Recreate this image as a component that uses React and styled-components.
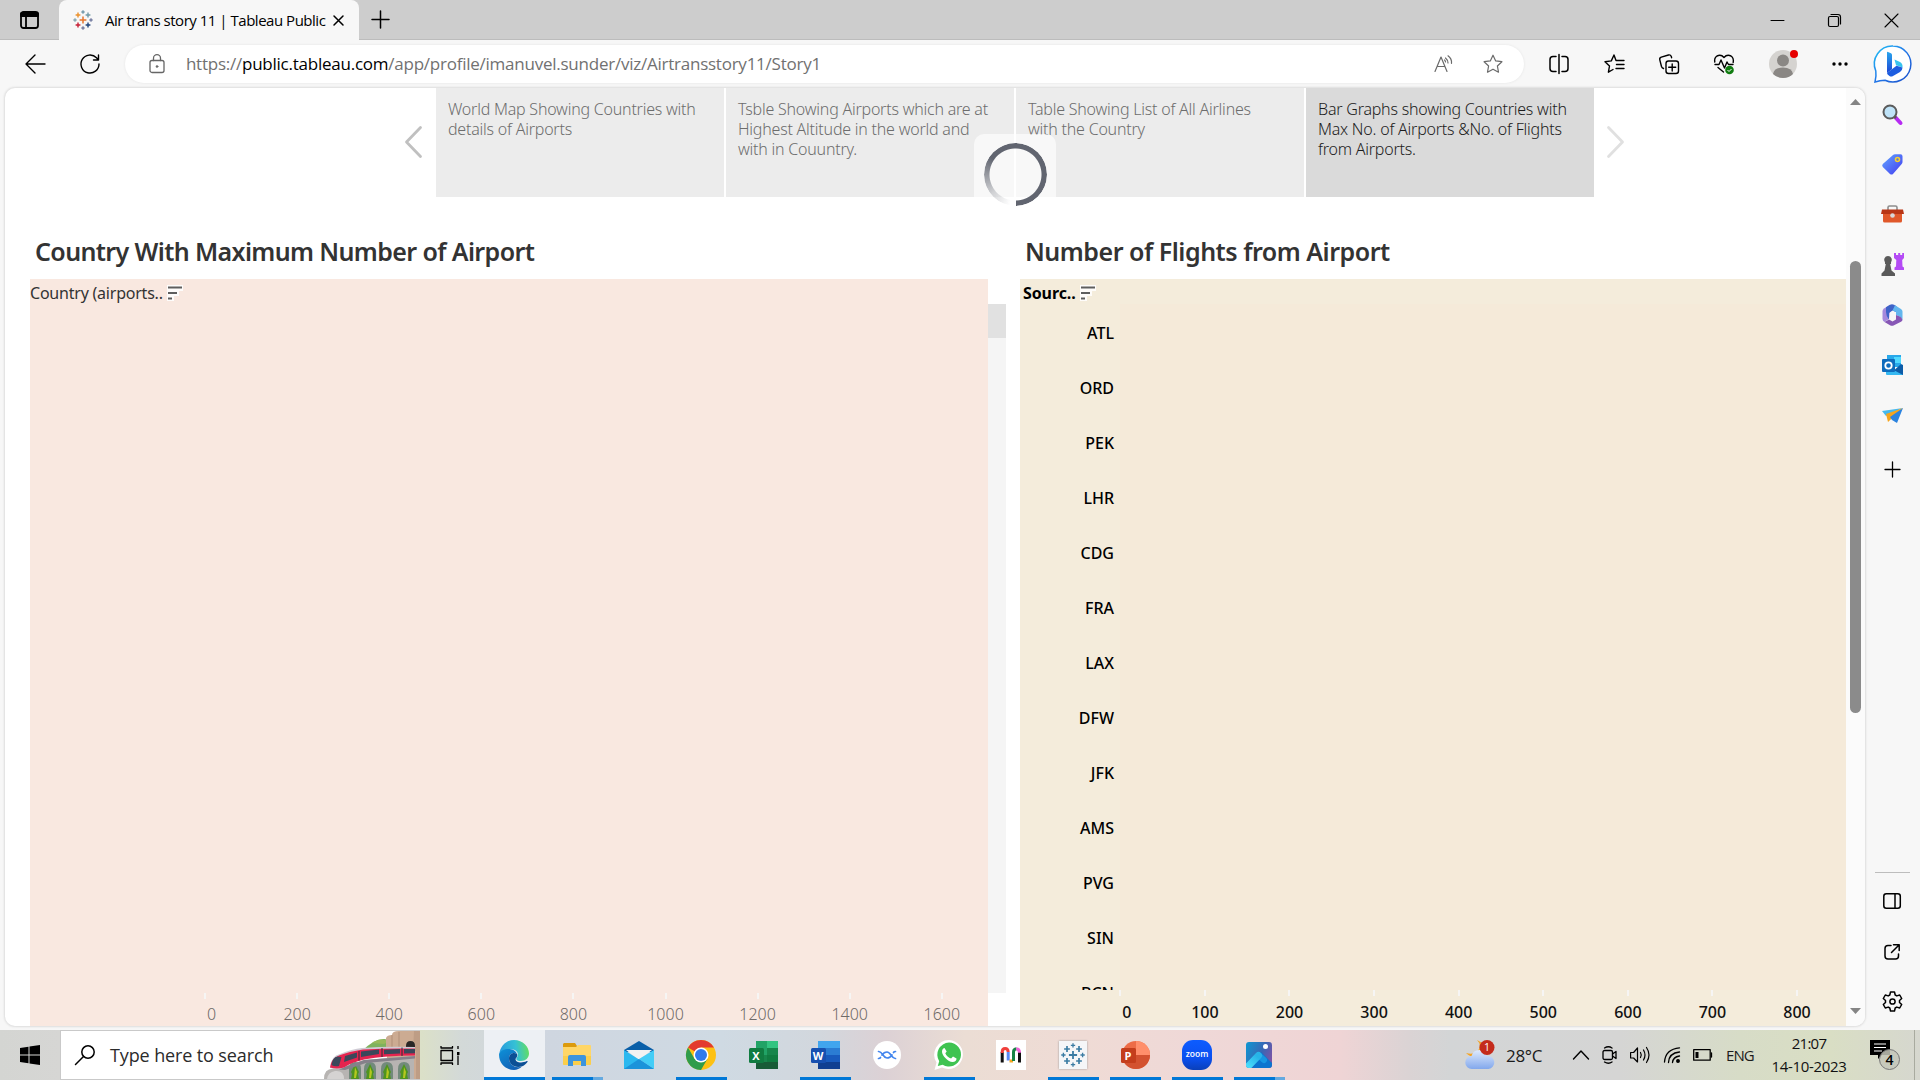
import React from "react";
import styled, { createGlobalStyle } from "styled-components";

const Global = createGlobalStyle`
  * { box-sizing: border-box; }
  body { margin: 0; overflow: hidden; background: #f7f7f7; }
  svg { display: block; flex: none; overflow: visible; }
`;
const ui = `"Open Sans", "Noto Sans", sans-serif`;
const chartFont = `"Noto Sans", "Open Sans", sans-serif`;

const Screen = styled.div`
  width: 1920px; height: 1080px; display: flex; flex-direction: column;
  background: #f7f7f7; font-family: ${ui}; color: #000; overflow: hidden;
`;
const TabBar = styled.header`
  height: 40px; flex: none; display: flex; background: #cdcdcd;
  box-shadow: inset 0 -1px 0 #bcbcbc;
`;
const TabActions = styled.div`
  width: 59px; display: flex; align-items: center; padding-left: 20px;
`;
const Tab = styled.div`
  width: 300px; height: 40px; display: flex; align-items: center; background: #f7f7f7;
  border-radius: 8px 8px 0 0; padding-left: 14px;
`;
const TabTitle = styled.span`
  width: 219px; margin: -1px 9px 0 12px; font-size: 15px; letter-spacing: -0.48px; white-space: nowrap;
`;
const NewTab = styled.div` display: flex; align-items: center; padding: 0 0 2px 13px; flex: 1; `;
const WindowButtons = styled.div`
  display: flex; align-items: center; gap: 44px; padding-right: 22px;
`;
const Toolbar = styled.div`
  height: 48px; flex: none; display: flex; align-items: center; padding: 0 8px 1px 25px;
`;
const NavButtons = styled.div` width: 100px; display: flex; gap: 35px; `;
const AddressBar = styled.div`
  width: 1400px; height: 38px; display: flex; align-items: center; background: #fff;
  border-radius: 19px; padding: 0 21px 0 24px; box-shadow: 0 0 3px rgba(0,0,0,.08);
`;
const Url = styled.span`
  flex: 1; margin-left: 21px; font-size: 17px; letter-spacing: -0.24px; color: #717171; white-space: nowrap;
  b { color: #000; font-weight: 400; }
`;
const AddressIcons = styled.div` display: flex; gap: 29px; align-items: center; `;
const ToolIcons = styled.div`
  flex: 1; display: flex; align-items: center; gap: 35px; padding-left: 25px;
  > :last-child { margin-left: -9px; }
`;
const Body = styled.div` height: 942px; flex: none; display: flex; `;
const Page = styled.main`
  width: 1860px; height: 938px; margin-left: 5px; background: #fff; border-radius: 10px; display: flex;
  overflow: hidden; box-shadow: 0 0 2px 1px #dedede;
`;
const Story = styled.div` width: 1841px; display: flex; flex-direction: column; `;
const StoryNav = styled.div` height: 109px; display: flex; padding-left: 400px; position: relative; `;
const NavArrow = styled.div`
  width: ${p => p.$w}px; padding: 38px 0 0 ${p => p.$pad || 0}px; color: ${p => p.$color};
`;
const StoryPoints = styled.div` display: flex; gap: 2px; `;
const StoryPoint = styled.div`
  width: 288px; height: 109px; padding: 11px 0 0 12px; font-family: ${chartFont};
  font-size: 16px; font-weight: 300; line-height: 20px; white-space: pre; letter-spacing: -0.22px;
  background: ${p => p.$active ? "#dadada" : "#ececec"};
  color: ${p => p.$active ? "#1c1c1c" : "#6d6d6d"};
`;
const Loader = styled.div`
  position: absolute; left: 969px; top: 46px; width: 82px; height: 82px; border-radius: 10px;
  background: rgba(255,255,255,.62); display: flex; align-items: center; justify-content: center;
`;
const Spinner = styled.div`
  width: 63px; height: 63px; border-radius: 50%; transform: translateY(-1px);
  background: conic-gradient(from 180deg, rgba(97,101,112,0) 10deg, rgba(97,101,112,.25) 50deg, #616570 125deg 360deg);
  mask: radial-gradient(circle closest-side, transparent 25.5px, #000 26.5px);
`;
const Charts = styled.div` display: flex; padding-left: 25px; height: 829px; `;
const LeftSheet = styled.section` width: 990px; `;
const RightSheet = styled.section` width: 826px; `;
const SheetTitle = styled.h2`
  height: 82px; margin: 0; padding: 38px 0 0 ${p => p.$pad}px; font: 600 25px/32px ${chartFont};
  letter-spacing: ${p => p.$ls}px; color: #333; white-space: nowrap;
`;
const LeftBody = styled.div` display: flex; height: 747px; `;
const LeftPane = styled.div`
  width: 958px; background: #f9e8e0; display: flex; flex-direction: column; justify-content: space-between;
`;
const SheetHeader = styled.div`
  height: 25px; display: flex; align-items: flex-start; gap: 4px; padding: 3px 0 0 ${p => p.$pad}px;
  font: ${p => p.$weight} 16px/22px ${chartFont}; letter-spacing: ${p => p.$ls}px; color: ${p => p.$color};
  svg { margin-top: 3px; }
`;
const PaneScroll = styled.div` width: 18px; height: 689px; margin-top: 25px; background: #f5f5f5; `;
const PaneThumb = styled.div` height: 34px; background: #e1e1e1; `;
const Axis = styled.div`
  display: flex; padding-left: ${p => p.$pad}px; height: ${p => p.$h}px; flex: none;
`;
const AxisStep = styled.div`
  width: ${p => p.$w}px; flex: none; display: flex; flex-direction: column; align-items: center;
  font: ${p => p.$weight} 16px/22px ${chartFont}; color: ${p => p.$color};
  &:first-child span { padding-left: 13px; }
`;
const Tick = styled.i` width: 2px; height: 6px; background: #f6f5f4; margin-bottom: ${p => p.$gap}px; `;
const RightPane = styled.div`
  height: 747px; background: #f4ecdb; display: flex; flex-direction: column;
`;
const Plot = styled.div` display: flex; height: 686px; overflow: hidden; flex: none; `;
const RowLabels = styled.div` width: 100px; display: flex; flex-direction: column; flex: none; `;
const RowLabel = styled.div`
  height: 55px; flex: none; text-align: right; padding: 2px 6px 0 0; font: 500 16px/55px ${chartFont};
`;
const PlotArea = styled.div` flex: 1; background: #f5ead9; `;
const Scrollbar = styled.div`
  width: 19px; background: #fbfbfb; display: flex; flex-direction: column; align-items: center;
  justify-content: space-between; padding: 11px 0 12px;
`;
const ScrollTrack = styled.div` flex: 1; padding-top: 156px; `;
const ScrollThumb = styled.div` width: 11px; height: 452px; border-radius: 6px; background: #8b8b8b; `;
const Sidebar = styled.aside`
  width: 54px; display: flex; flex-direction: column; align-items: center; padding-top: 1px;
`;
const SideSlot = styled.div`
  height: ${p => p.$h || 50.2}px; width: 40px; flex: none; display: flex; align-items: center; justify-content: center;
`;
const SideDivider = styled.div` width: 35px; height: 1px; background: #bdbdbd; margin: 374px 0 3px; flex: none; `;

const Taskbar = styled.footer`
  height: 50px; flex: none; display: flex;
  background: linear-gradient(90deg, #d4d5d2 0, #d6d6d4 60px, #dbe0c8 422px, #d3d9d8 462px, #cfd6e0 550px,
    #cfdae3 720px, #d2d7dd 820px, #dcd1d5 885px, #ebddd4 965px, #efdbd5 1080px, #efd8d7 1200px, #efd4d5 1340px,
    #dad3d4 1410px, #d3d5d6 1450px, #d5d5d4 1620px, #d7dcc7 1740px, #d9dec4 1830px, #d6d7cf 1920px);
`;
const Start = styled.div` width: 60px; display: flex; align-items: center; padding-left: 20px; `;
const Search = styled.div`
  width: 360px; height: 50px; background: #fff; border: 1px solid #c9c9c9; display: flex; align-items: center;
  padding-left: 14px; border-right: 0; overflow: hidden;
`;
const SearchText = styled.span`
  width: 229px; padding-left: 15px; font-size: 18px; color: #2b2b2b; letter-spacing: -0.12px; white-space: nowrap;
`;
const TaskView = styled.div` width: 64px; display: flex; align-items: center; padding-left: 20px; `;
const AppTile = styled.div`
  width: 62px; height: 50px; display: flex; flex-direction: column; align-items: center;
  justify-content: space-between; padding-top: 10px;
`;
const ActiveTile = styled(AppTile)` background: linear-gradient(90deg, #edf0f4 61px, transparent 61px); align-items: flex-start; > :first-child { padding-left: 15px; } `;
const Underline = styled.div`
  height: 3px; width: ${p => p.$full ? 61 : 51}px;
  background: ${p => p.$more ? "linear-gradient(90deg,#0078d7 41px,#64a9e0 41px)" : p.$on ? "#0078d7" : "transparent"};
`;
const Tray = styled.div` flex: 1; display: flex; align-items: center; padding-left: 175px; `;
const TrayText = styled.span`
  width: ${p => p.$w}px; padding-left: ${p => p.$pad || 0}px; font-size: ${p => p.$size}px;
  letter-spacing: ${p => p.$ls}px; color: #1b1b1b; white-space: nowrap;
`;
const TrayIcons = styled.div` display: flex; align-items: center; width: 153px; justify-content: space-between; padding-right: 14px; `;
const Clock = styled.div`
  width: 90px; text-align: center; font-size: 15px; line-height: 23px; letter-spacing: ${p => p.$ls || 0}px; color: #111;
  span { letter-spacing: -0.7px; }
`;
const Notice = styled.div` width: 60px; padding-left: 16px; `;
const ShowDesktop = styled.div` width: 6px; height: 50px; border-left: 1px solid #a8aa9f; `;

const Icon = ({ w = 20, h = w, vb, sw = 1.4, children }) => (
  <svg width={w} height={h} viewBox={vb || `0 0 ${w} ${h}`} fill="none" stroke="currentColor" strokeWidth={sw}
    strokeLinecap="round" strokeLinejoin="round">{children}</svg>
);
const Art = ({ w = 30, h = w, vb, children }) => (
  <svg width={w} height={h} viewBox={vb || `0 0 ${w} ${h}`}>{children}</svg>
);

const plus = (x, y, r, c, w = 1.5) => <path key={`${x}-${y}`} d={`M${x - r} ${y}h${2 * r}M${x} ${y - r}v${2 * r}`} stroke={c} strokeWidth={w} />;
const TableauMark = ({ size, mono }) => {
  const c = (x) => mono ? "#3b7ca3" : x;
  return (
    <Art w={size} vb="0 0 20 20">
      {plus(10, 10, 3.4, c("#e8762d"), 1.5)}
      {plus(5, 5, 2.4, c("#eb912c"), 1.4)}{plus(15, 5, 2.4, c("#7099a6"), 1.4)}
      {plus(5, 15, 2.4, c("#c72035"), 1.4)}{plus(15, 15, 2.4, c("#1f457e"), 1.4)}
      {plus(10, 2, 1.8, c("#59879b"), 1.1)}{plus(10, 18, 1.8, c("#5b6591"), 1.1)}
      {plus(2, 10, 1.8, c("#7099a6"), 1.1)}{plus(18, 10, 1.8, c("#5b6591"), 1.1)}
    </Art>
  );
};
const SortIcon = () => (
  <Art w={16}><path fill="#fff" d="M0 0h16v6h-4v5H7v5H0z" opacity=".85" /><path d="M1 2.500h14M1 8h9M1 13.500h4" stroke="#5e5e5e" strokeWidth="2" /></Art>
);

const Edge = () => (
  <Art>
    <defs>
      <linearGradient id="eg1" x1="0" x2="1" y1=".3" y2=".2"><stop stopColor="#279bdd" /><stop offset=".55" stopColor="#35c1d5" /><stop offset="1" stopColor="#66df5a" /></linearGradient>
      <linearGradient id="eg2" x1="0" y1="0" x2=".6" y2="1"><stop stopColor="#0d91d8" /><stop offset="1" stopColor="#1361b5" /></linearGradient>
    </defs>
    <path fill="url(#eg1)" d="M.3 14.5C1 6 7.500 0 15 0c9 0 15 6.500 15 13.500 0 4.500-3.500 7.500-8 7.500-3.500 0-5.500-1.500-4.500-2.800 3.200-4 .5-8.700-5-8.900C7 9.200 1.700 12 .3 14.5z" />
    <path fill="url(#eg2)" d="M.1 14C1.500 10.500 6 8.600 10.500 9c3.700.3 6.500 2.200 7.600 5-4-2.400-8.100.2-8.100 4.500 0 5 5.500 10.600 13 8-2.300 2.200-5 3.500-8 3.500C6.500 30-.5 23 .1 14z" />
    <path fill="#0c4f95" d="M18.100 14c-4-2.400-8.100.2-8.100 4.500 0 5.500 6 10.500 13.300 7.800 2.200-1 4.200-2.900 5.300-4.600.3-.6-.2-.9-.8-.6-5.800 2.900-11.800.8-11.200-2.100.2-1.300 2.300-2 1.500-5z" />
  </Art>
);
const Folder = () => (
  <Art w={28} h={24}>
    <path fill="#dc9a0c" d="M1 0h11l2 3v4H0V1z" /><path fill="#ffd667" d="M0 4h13l2-2h12q1 0 1 1v18q0 1-1 1H1q-1 0-1-1z" />
    <path fill="#f9c838" d="M0 13h28v8q0 1-1 1H1q-1 0-1-1z" opacity=".6" /><path fill="#3c94dc" d="M5 23v-9q0-2 2-2h14q2 0 2 2v9h-5v-5h-8v5z" />
  </Art>
);
const Mail = () => (
  <Art w={30} h={28}>
    <path fill="#0a5fa8" d="M0 9 15 0l15 9v2H0z" /><path fill="#f2f2f2" d="M2 9h26L15 19z" />
    <path fill="#2bb8ef" d="M0 9v19h30z" /><path fill="#43cdf7" d="M30 9v19L15 18z" /><path fill="#1b93da" d="m0 28 15-10 15 10z" />
  </Art>
);
const Chrome = () => (
  <Art vb="0 0 30 30">
    <circle cx="15" cy="15" r="15" fill="#fdc113" />
    <path fill="#e33b2e" d="M15 15 2 7.500A15 15 0 0 1 28 7.500H15z" /><path fill="#2f9c4b" d="M2 7.500A15 15 0 0 0 15 30l6.500-11.200L8.500 18.800z" />
    <circle cx="15" cy="15" r="7.500" fill="#fff" /><circle cx="15" cy="15" r="6" fill="#2f7bed" />
  </Art>
);
const OfficeLetter = styled.span`
  position: absolute; left: 0; top: 7px; width: 15px; height: 15px; border-radius: 1.5px; background: ${p => p.$bg};
  color: #fff; font: 700 11px/15px ${ui}; text-align: center;
`;
const OfficeBox = styled.div` position: relative; width: 29px; height: 28px; `;
const Office = ({ letter, tones, badge }) => (
  <OfficeBox>
    <Art w={29} h={28}>
      {letter === "X"
        ? <><path fill={tones[1]} d="M7 0h11v7H7z" /><path fill={tones[0]} d="M18 0h11v7H18z" /><path fill={tones[2]} d="M18 7h11v7H18zM7 14h11v7H7z" /><path fill={tones[1]} d="M7 7h11v7H7z" /><path fill="#107c41" d="M18 14h11v7H18z" /><path fill={tones[3]} d="M7 21h22v7H7z" /></>
        : tones.map((t, i) => <path key={t} fill={t} d={`M7 ${i * 7}h22v7H7z`} />)}
    </Art>
    <OfficeLetter $bg={badge}>{letter}</OfficeLetter>
  </OfficeBox>
);
const PowerPoint = () => (
  <OfficeBox>
    <Art w={29} h={28}><circle cx="15" cy="14" r="14" fill="#ed6c47" /><path fill="#ff8f6b" d="M15 0a14 14 0 0 1 14 14H15z" /><path fill="#d35230" d="M1 14h28a14 14 0 0 1-28 0z" /></Art>
    <OfficeLetter $bg="#c43e1c">P</OfficeLetter>
  </OfficeBox>
);
const Nx = () => (
  <Art w={28}><circle cx="14" cy="14" r="14" fill="#fff" />
    <g fill="none" stroke="#4285ee" strokeWidth="1.700" strokeLinecap="round"><path d="M5.500 10.500c4-.5 4.500 6.500 8.500 6.500 3 0 4-1.500 5-3M22.500 17.500c-4 .5-4.500-6.500-8.500-6.500-3 0-4 1.500-5 3M5.500 17.500q1.500 0 2-1M22.500 10.500q-1.500 0-2 1" /></g>
  </Art>
);
const WhatsApp = () => (
  <Art><path fill="#fff" d="M15 0a14.500 14.500 0 1 1-7 27.500L.5 30l2-7.500A14.700 14.700 0 0 1 15 0z" />
    <path fill="#3fc351" d="M15 2.500a12 12 0 1 1-6.300 22.200L3.800 26l1.400-4.800A12.200 12.200 0 0 1 15 2.500z" />
    <path fill="#fff" d="M10.500 8c-.8-.1-2.500 1.200-2.500 3.700 0 3.800 6.200 10.300 10.500 10.300 2.500 0 4.300-1.700 4-3.500l-3.500-2-1.900 2c-2.500-.7-4.900-3.100-5.800-5.300l1.400-1.800z" />
  </Art>
);
const MApp = () => (
  <Art><path fill="#fff" d="M0 0h30v30H0z" /><g fill="none" strokeWidth="3">
    <path stroke="#111" d="M6.200 22.500V12M23.500 22.500V12" /><path stroke="#f0403c" d="M6.200 13v-1q0-3.500 3-3.500 2.800 0 3 3.500" /><path stroke="#5a89f4" d="M12.200 12v8.500" />
    <path stroke="#f5a623" d="M13.500 21h3.500" /><path stroke="#168344" d="M17.500 21v-9q0-3 3-3.300" /><path stroke="#ef62d6" d="M20.300 8.700q3.200.3 3.200 4" /></g>
  </Art>
);
const TableauTile = styled.div`
  width: 28px; height: 28px; background: #f5f6f8; display: flex; align-items: center; justify-content: center; box-shadow: 0 0 2px #999;
`;
const ZoomTile = styled.div`
  width: 30px; height: 30px; border-radius: 11px; background: linear-gradient(#0d5cff, #0b50f0 60%, #0a3fb9); color: #fff;
  font: 600 8.500px/27px ${ui}; text-align: center;
`;
const Photos = () => (
  <Art w={26}><defs>
    <linearGradient id="ph" x1="0" y1=".2" x2="1" y2=".6"><stop stopColor="#1292cf" /><stop offset=".6" stopColor="#3a66b4" /><stop offset="1" stopColor="#7a54a6" /></linearGradient>
    <linearGradient id="ph2" x1=".8" y1="0" x2="0" y2="1"><stop stopColor="#27b4e8" /><stop offset="1" stopColor="#4fe3ff" /></linearGradient>
    <clipPath id="phc"><rect width="26" height="26" rx="3" /></clipPath></defs>
    <g clipPath="url(#phc)"><path fill="url(#ph)" d="M0 0h26v26H0z" /><path fill="#0b74cf" d="M15 10 28 23v5H5l8-12z" />
      <path fill="none" stroke="#1596e3" strokeWidth="6" strokeLinecap="round" strokeLinejoin="round" d="m13 13.500 5 4.500" />
      <path fill="none" stroke="url(#ph2)" strokeWidth="7" strokeLinecap="round" d="M0 26.500 12.500 13.500" /></g>
    <circle cx="19.500" cy="4.500" r="2.500" fill="#fff" />
  </Art>
);
const Train = () => (
  <Art w={96} h={48} vb="0 0 96 48">
    <path fill="#7fb25d" d="M37 21Q50 7 61 8l9 4v9z" /><path fill="#9ab95a" d="M48 12q8-6 18-2l-6 3z" />
    <path fill="#ccab92" d="M62 20V7q1-3 6-3 0-4 7-4h21v48H66z" /><path fill="#b2917a" d="M67 4h2v14h-2zM74 1h2v17h-2zM90 0h6v48h-4V20h-3z" opacity=".55" />
    <path fill="#292626" d="M82 18v-3q0-5 4.500-5t4.500 5v3z" />
    <path fill="#b7b4b2" d="M0 48q0-12 12-10l28-9 50-4v23z" />
    <path fill="#d5d3d2" d="M3 48q1-7 8-8 9-1 9 8z" />
    {[25, 40, 57, 74].map(x => <g key={x}><path fill="#728a7c" d={`M${x} 48V38q0-7 6-7t6 7v10z`} /><path fill="#4f9420" d={`m${x + 6} 33 4 8-1 2 1 5h-8l1-5-1-2z`} /><path fill="#b5c81e" d={`m${x + 6} 36 2 5-1 6h-2z`} /></g>)}
    <path fill="#85808a" d="M19 36.500 40 29l51-4v2.500L42 32l-21 7-6-.5z" />
    <path fill="#cfcbd4" d="M6 36q1-11 10-13 12-5 22-6 24-2 53-1v8q-30 0-50 4-14 3-22 9-7 2-13 0z" />
    <path fill="#e5244f" d="M6 36.500q1-9 9-12 10-4 24-6 24-1.500 52-1v7q-30 0-51 4-13 3-20 8-7 2-14 0z" />
    <path fill="#3b475a" d="M7.500 34q1-8 6-8.500l4 .5-2.500 9q-4 1-7.500-1zM21 25l12-3.500v5L20 31zM37 20.500l18-2v4.500l-18 3zM60 18.700l16-.7v4.500l-16 .8zM80 18h11v4.300l-11 .2z" />
    <path stroke="#2b2f3a" d="M35 20v9.500M58 17v9M78 16.500v8.500" fill="none" />
  </Art>
);
const Weather = () => (
  <Art w={30} h={30}><path fill="#f5a423" d="M12 0q5 5 1 11-4 4-12 2 5 5 10 4l9-4Q20 3 12 0z" />
    <defs><linearGradient id="cl" x1="0" y1="0" x2="0" y2="1"><stop stopColor="#dfeafd" /><stop offset="1" stopColor="#82a8ec" /></linearGradient></defs>
    <path fill="url(#cl)" d="M7 29a6.500 6.500 0 0 1-.5-13Q8 10 14.500 10T22 16a6.500 6.500 0 1 1 1.500 13z" />
    <circle cx="22" cy="7.500" r="7.500" fill="#c42b1c" /><text x="22" y="11.300" fill="#fff" fontSize="10.500" fontFamily="Open Sans, sans-serif" textAnchor="middle">1</text>
  </Art>
);
const Bing = () => (
  <Art w={38}><defs><linearGradient id="bb" x1="0" y1="0" x2="1" y2="1"><stop stopColor="#22c3f5" /><stop offset=".5" stopColor="#2277e8" /><stop offset="1" stopColor="#1b4fc9" /></linearGradient>
    <linearGradient id="bb2" x1="0" y1="0" x2="0" y2="1"><stop stopColor="#2aa7ee" /><stop offset="1" stopColor="#1c46d4" /></linearGradient></defs>
    <path fill="#fff" stroke="url(#bb)" strokeWidth="1.500" d="M19 1a18 18 0 1 1-8 34.200Q6 35.500 1 37q1.500-6 .8-11A18 18 0 0 1 19 1z" />
    <path fill="url(#bb2)" d="M13 7.500q0-1 1-.6l3 1.300q1 .5 1 1.500v14.500L13 28z" /><path fill="#38c4ee" d="M20.500 14.500 26 17q3 1.500 2.500 5.500L22 20.200z" />
    <path fill="#1d5de0" d="m13 28 9.500-7.300 6 1.800q0 3-2.500 4.500L19 31q-2 1-3.500 0Q13 29.500 13 28z" />
  </Art>
);
const SideArt = {
  search: <Art w={20} h={21}><path d="m13.500 13.500 5 5.500" stroke="#b62bf2" strokeWidth="4" strokeLinecap="round" /><path d="m12 12 2 2" stroke="#555" strokeWidth="2.500" /><circle cx="8" cy="8" r="6.500" fill="#bfe3f8" stroke="#5b5b5b" strokeWidth="2" /></Art>,
  tag: <Art w={21}><defs><linearGradient id="tg" x1="0" y1="0" x2="1" y2="1"><stop stopColor="#62a8ff" /><stop offset="1" stopColor="#4239f0" /></linearGradient></defs><path fill="url(#tg)" d="M11 1q.8-.8 2-.8h5.500q2 0 2 2V8q0 1-.8 2L11 20q-1.500 1.200-3 0L.8 13Q-.4 11.500.8 10z" /><circle cx="15.500" cy="5.500" r="2" fill="#5b7bd0" stroke="#f6cf31" strokeWidth="1.600" /></Art>,
  toolbox: <Art w={23} h={18}><path d="M7 5V2.500Q7 1 8.500 1h6Q16 1 16 2.500V5" fill="none" stroke="#8d8d8d" strokeWidth="1.600" /><path fill="#e0582a" d="M2 9h19v7q0 1.500-1.500 1.500h-16Q2 17.500 2 16z" /><path fill="#b83616" d="M1 4.500h21L23 9H0z" /><circle cx="11.500" cy="10.500" r="2.300" fill="#d8d8d8" /></Art>,
  chess: <Art w={23} h={23}><path fill="#b44bf5" d="M13 0h2v2h2.200V0h2v2h2V0H23v5l-1.800 2 .3 6.500 1.500 1V17h-9.500v-2.500l1.500-1 .3-6.500L13 5z" /><path fill="#5a5a5a" d="M7 3a4 4 0 0 1 3 6.500V11h-.8l1.300 6.500 3.500 3V23H.5v-2.500l3-3L4.800 11H4V9.500A4 4 0 0 1 7 3z" /></Art>,
  m365: <Art w={21} h={22}><path fill="#a489dc" d="M8 .8v3.700L7 15l-4.500 3Q.5 17 .5 15V7q0-1.500 1.500-2.500z" /><path fill="#3e63c8" d="M8 .8q2-1.300 4 0l2.500 1.400v6L10.500 6.500 7 9v6.500Q4 12 4 8V3.200z" /><path fill="#62b6ee" d="M13 1.300 19 5q1.500 1 1.500 2.500V16q-1-3-6.500-5V8l-3.500-1.500z" /><path fill="#8757b5" d="M14 11q6 1.500 6.500 5-.3 1-1.500 1.800L12 21.300q-2 1-4 0L2.500 18 7 15.500l3.500 2 3.500-2z" /></Art>,
  outlook: <Art w={21}><path fill="#28a8ea" d="M5 0h14v12H5z" /><path fill="#0c5ca8" d="m19 9 2 1v10H7z" /><path fill="#35b8f1" d="m4 11 17 9H5q-1 0-1-1z" /><path fill="#50d9ff" d="M12 2h7v6h-7z" /><rect y="4" width="13" height="13" rx="1" fill="#0f6cbd" /><circle cx="6.500" cy="10.500" r="3.200" fill="none" stroke="#fff" strokeWidth="1.800" /></Art>,
  plane: <Art w={21} h={15}><path fill="#45b9ef" d="M0 3 21 0 4 8z" /><path fill="#f6a51d" d="M4 6 21 0 6 14z" /><path fill="#2b83df" d="M8 9 21 0l-6 15-5-3z" /></Art>,
  plus: <Icon w={15} sw={1.300}><path d="M7.500 0v15M0 7.500h15" /></Icon>,
};
const sideOrder = ["search", "tag", "toolbox", "chess", "m365", "outlook", "plane", "plus"];

const star = "M10 1.200l2.700 5.700 6.200.8-4.500 4.300 1.100 6.200-5.500-3-5.500 3 1.100-6.200L1.100 7.700l6.200-.8z";

const points = [
  { text: "World Map Showing Countries with\ndetails of Airports" },
  { text: "Tsble Showing Airports which are at\nHighest Altitude in the world and\nwith in Couuntry." },
  { text: "Table Showing List of All Airlines\nwith the Country" },
  { text: "Bar Graphs showing Countries with\nMax No. of Airports &No. of Flights\nfrom Airports.", active: true },
];
const airports = ["ATL", "ORD", "PEK", "LHR", "CDG", "FRA", "LAX", "DFW", "JFK", "AMS", "PVG", "SIN", "BCN"];
const range = (step) => Array.from({ length: 9 }, (_, i) => i * step);

const apps = [
  { icon: <Edge />, on: true, full: true },
  { icon: <Folder />, on: true, more: true },
  { icon: <Mail /> },
  { icon: <Chrome />, on: true },
  { icon: <Office letter="X" tones={["#33c481", "#21a366", "#17864c", "#185c37"]} badge="#107c41" /> },
  { icon: <Office letter="W" tones={["#41a5ee", "#2b7cd3", "#185abd", "#103f91"]} badge="#1750b0" />, on: true },
  { icon: <Nx /> },
  { icon: <WhatsApp />, on: true },
  { icon: <MApp /> },
  { icon: <TableauTile><TableauMark size={24} mono /></TableauTile>, on: true },
  { icon: <PowerPoint />, on: true },
  { icon: <ZoomTile>zoom</ZoomTile>, on: true },
  { icon: <Photos />, on: true, more: true },
];
const AppArt = styled.div` height: 30px; display: flex; align-items: center; `;

export default function App() {
  return (
    <Screen>
      <Global />
      <TabBar>
        <TabActions><Icon w={19} h={18} sw={1.800}><rect x="1" y="1" width="17" height="16" rx="2.500" /><path d="M1 5h17M6 5v12" /><path d="M2 3h15" strokeWidth="4" /></Icon></TabActions>
        <Tab>
          <TableauMark size={20} />
          <TabTitle>Air trans story 11 | Tableau Public</TabTitle>
          <Icon w={11} sw={1.500}><path d="m1 1 9 9M10 1 1 10" /></Icon>
        </Tab>
        <NewTab><Icon w={17} sw={1.500}><path d="M8.500 0v17M0 8.500h17" /></Icon></NewTab>
        <WindowButtons>
          <Icon w={13} sw={1}><path d="M0 6.500h13" /></Icon>
          <Icon w={13} sw={1.200}><rect x=".5" y="2.500" width="10" height="10" rx="1.500" /><path d="M3 .5h7q2.500 0 2.500 2.500v7" /></Icon>
          <Icon w={13} sw={1.100}><path d="m0 0 13 13M13 0 0 13" /></Icon>
        </WindowButtons>
      </TabBar>
      <Toolbar>
        <NavButtons>
          <Icon w={20}><path d="M10 1 1 10l9 9M1 10h19" /></Icon>
          <Icon w={20}><path d="M19 10a9 9 0 1 1-2.500-6.200L18.500 6M18.500 1v5h-5" /></Icon>
        </NavButtons>
        <AddressBar>
          <Icon w={16} h={19} sw={1.300}><g stroke="#666"><rect x="1" y="6.500" width="14" height="12" rx="2" /><path d="M4.500 6.500V4.200a3.500 3.500 0 0 1 7 0v2.300" /></g><circle cx="8" cy="12.500" r="1" fill="#666" stroke="#666" strokeWidth=".6" /></Icon>
          <Url>https://<b>public.tableau.com</b>/app/profile/imanuvel.sunder/viz/Airtransstory11/Story1</Url>
          <AddressIcons>
            <Icon w={20} sw={1.200}><g stroke="#6a6a6a"><path d="M1 17.500 7 3l6 14.500M3 12.500h8" /><path d="M11.500 4q2.500 2 2.500 5M14 1.800q4 3 3.500 7.500M10.500 6q.8.5 1 1.800" /></g></Icon>
            <Icon w={20} sw={1.200}><path d={star} stroke="#6a6a6a" /></Icon>
          </AddressIcons>
        </AddressBar>
        <ToolIcons>
          <Icon w={20} sw={1.500}><path d="M7 2.500H4q-3 0-3 3v9q0 3 3 3h3M13 2.500h3q3 0 3 3v9q0 3-3 3h-3M10 .5v19" /></Icon>
          <Icon w={20}><path d="M12 6.500 10 1 7.300 6.900 1 7.700 5.500 12l-1.100 6.200 4.600-2.700M12 6.500h8M12.500 10.500H20M12 14.500h8" /></Icon>
          <Icon w={20}><rect x="7" y="7" width="12.500" height="12.500" rx="2.500" /><path d="M13.200 10v7M9.700 13.300h7M4.500 14.500q-1.500-.5-2-2L.8 5.800q-.5-2 1.500-2.700L9.500 1q2-.5 2.800 1.500l.3 1.200" /></Icon>
          <Art w={20} h={20}><g fill="none" stroke="#000" strokeWidth="1.400" strokeLinecap="round" strokeLinejoin="round"><path d="M.8 8Q0 4 3 2q4-2 7 1.500Q13 0 17 2q3 2 2.200 6.500M1 10.500h4l2-4.500 3.500 8 2.500-6 1.500 2.500h4.500M4 13.500l5.500 4.500" /></g><circle cx="15.500" cy="16" r="4.300" fill="#107c10" /><path d="m13.500 16 1.500 1.500 2.500-2.500" stroke="#fff" fill="none" /></Art>
          <Art w={28} h={28}><circle cx="14" cy="14" r="14" fill="#d5d3d0" /><circle cx="14" cy="10.500" r="6" fill="#8a8784" /><path fill="#8a8784" d="M4 24q1-6.500 10-6.500T24 24q-4 4-10 4T4 24z" /><circle cx="25" cy="4" r="4" fill="#e60000" /></Art>
          <Art w={16} h={4}><circle cx="2" cy="2" r="1.700" /><circle cx="8" cy="2" r="1.700" /><circle cx="14" cy="2" r="1.700" /></Art>
          <Bing />
        </ToolIcons>
      </Toolbar>
      <Body>
        <Page>
          <Story>
            <StoryNav>
              <NavArrow $w={31} $color="#c0c0c0"><Icon w={17} h={32} sw={2.800}><path d="M15.500 1.500 1.500 16l14 14.500" /></Icon></NavArrow>
              <StoryPoints>
                {points.map(p => <StoryPoint key={p.text} $active={p.active}>{p.text}</StoryPoint>)}
              </StoryPoints>
              <NavArrow $w={40} $pad={13} $color="#e0e0e0"><Icon w={17} h={32} sw={2.800}><path d="m1.500 1.500 14 14.500-14 14.500" /></Icon></NavArrow>
              <Loader><Spinner /></Loader>
            </StoryNav>
            <Charts>
              <LeftSheet>
                <SheetTitle $pad={5} $ls={-0.62}>Country With Maximum Number of Airport</SheetTitle>
                <LeftBody>
                  <LeftPane>
                    <SheetHeader $pad={0} $weight={400} $color="#333" $ls={-0.22}><span>Country (airports..</span><SortIcon /></SheetHeader>
                    <Axis $pad={129} $h={33}>
                      {range(200).map(v => <AxisStep key={v} $w={92.1} $weight={300} $color="#6e6a68"><Tick $gap={4} /><span>{v}</span></AxisStep>)}
                    </Axis>
                  </LeftPane>
                  <PaneScroll><PaneThumb /></PaneScroll>
                </LeftBody>
              </LeftSheet>
              <RightSheet>
                <SheetTitle $pad={5} $ls={-0.48}>Number of Flights from Airport</SheetTitle>
                <RightPane>
                  <SheetHeader $pad={3} $weight={700} $color="#000" $ls={-0.1}><span>Sourc..</span><SortIcon /></SheetHeader>
                  <Plot>
                    <RowLabels>{airports.map(a => <RowLabel key={a}>{a}</RowLabel>)}</RowLabels>
                    <PlotArea />
                  </Plot>
                  <Axis $pad={58} $h={36}>
                    {range(100).map(v => <AxisStep key={v} $w={84.6} $weight={500} $color="#111"><Tick $gap={5} /><span>{v}</span></AxisStep>)}
                  </Axis>
                </RightPane>
              </RightSheet>
            </Charts>
          </Story>
          <Scrollbar>
            <Art w={11} h={6}><path fill="#858585" d="M0 6 5.500 0 11 6z" /></Art>
            <ScrollTrack><ScrollThumb /></ScrollTrack>
            <Art w={11} h={6}><path fill="#858585" d="m0 0 5.500 6L11 0z" /></Art>
          </Scrollbar>
        </Page>
        <Sidebar>
          {sideOrder.map(k => <SideSlot key={k} $h={k === "plus" ? 58 : 50.2}>{SideArt[k]}</SideSlot>)}
          <SideDivider />
          <SideSlot><Icon w={18} h={16} sw={1.500}><rect x=".8" y=".8" width="16.500" height="14.500" rx="2.500" /><path d="M12 1v14" /></Icon></SideSlot>
          <SideSlot><Icon w={16} sw={1.500}><path d="M7 1.500H4q-3 0-3 3V12q0 3 3 3h7.500q3 0 3-3v-2M9.500.8h5.700v5.700M15 1 7.500 8.500" /></Icon></SideSlot>
          <SideSlot><Icon w={21} sw={1.500}><circle cx="10.500" cy="10.500" r="2.600" /><path d="M8.500 1h4l.7 3 1.600.9 2.900-.9 2 3.500-2.200 2v2l2.200 2-2 3.500-2.900-.9-1.600.9-.7 3h-4l-.7-3-1.600-.9-2.900.9-2-3.500 2.200-2v-2l-2.200-2 2-3.500 2.900.9L7.800 4z" /></Icon></SideSlot>
        </Sidebar>
      </Body>
      <Taskbar>
        <Start><Art w={20}><path d="M0 3l8.500-1.200v7.700H0zM9.500 1.600 20 0v9.500H9.500zM0 10.500h8.500v7.700L0 17zM9.500 10.500H20V20L9.500 18.400z" /></Art></Start>
        <Search>
          <Icon w={20} sw={1.500}><circle cx="13" cy="7" r="6.200" /><path d="M8.500 11.500.5 19.500" /></Icon>
          <SearchText>Type here to search</SearchText>
          <Train />
        </Search>
        <TaskView><Icon w={20} h={19} sw={1.300}><rect x="1" y="4.500" width="11.500" height="10" /><path d="M1 0v2h11.500V0M1 19v-2h11.500v2M18 0v3M18 9.500V19" strokeLinecap="butt" /><path d="M17 7.500h2.500" strokeWidth="3" strokeLinecap="butt" /></Icon></TaskView>
        {apps.map((a, i) => {
          const Tile = a.full ? ActiveTile : AppTile;
          return <Tile key={i}><AppArt>{a.icon}</AppArt><Underline $on={a.on} $more={a.more} $full={a.full} /></Tile>;
        })}
        <Tray>
          <Weather />
          <TrayText $w={78} $size={17} $ls={-0.3} $pad={11}>28°C</TrayText>
          <TrayIcons>
            <Icon w={16} h={10} sw={1.400}><path d="m.5 9 7.500-8 7.500 8" /></Icon>
            <Icon w={15} h={18} sw={1.300}><rect x="1" y="4.500" width="9.500" height="9" rx="1.500" /><path d="m10.500 8 3.500-2.500v7L10.500 10M2.500 2q4-2.500 7.500 0M2.500 16q4 2.500 7.500 0" /></Icon>
            <Icon w={21} h={18} sw={1.200}><path d="M.6 6.500h3L7.500 2v14L3.600 12h-3zM10.500 6.500q1.500 2.500 0 5M13.500 4q3 5 0 10M16.500 1.500q5 7.500 0 15" /></Icon>
            <Icon w={16} h={16} sw={1.300}><path d="M.5 15Q1.500 2 15.500.8M4.500 15.500Q5 6 15.500 5M8.500 15.500Q9 10 15.500 9" /><circle cx="14" cy="14" r="1.300" fill="#000" /></Icon>
            <Icon w={19} h={12} sw={1.300}><rect x=".7" y=".7" width="16.500" height="10.500" /><path d="M18.500 4v4" /><path d="M4 3v6" strokeWidth="3" strokeLinecap="butt" /></Icon>
          </TrayIcons>
          <TrayText $w={38} $size={15} $ls={-0.9}>ENG</TrayText>
          <Clock $ls={-0.35}><span>21:07</span><br />14-10-2023</Clock>
          <Notice><Art w={30} h={30}><path d="M0 0h20v15H12l-4 4v-4H0z" /><path d="M4 4h12M4 7.500h12M4 11h8" stroke="#fff" strokeWidth="1.200" /><circle cx="19.500" cy="19.500" r="10" fill="#c4c6b9" fillOpacity=".85" stroke="#777" /><text x="19.500" y="24.500" fontSize="14" fontFamily="Open Sans, sans-serif" fontWeight="600" textAnchor="middle">4</text></Art></Notice>
          <ShowDesktop />
        </Tray>
      </Taskbar>
    </Screen>
  );
}
